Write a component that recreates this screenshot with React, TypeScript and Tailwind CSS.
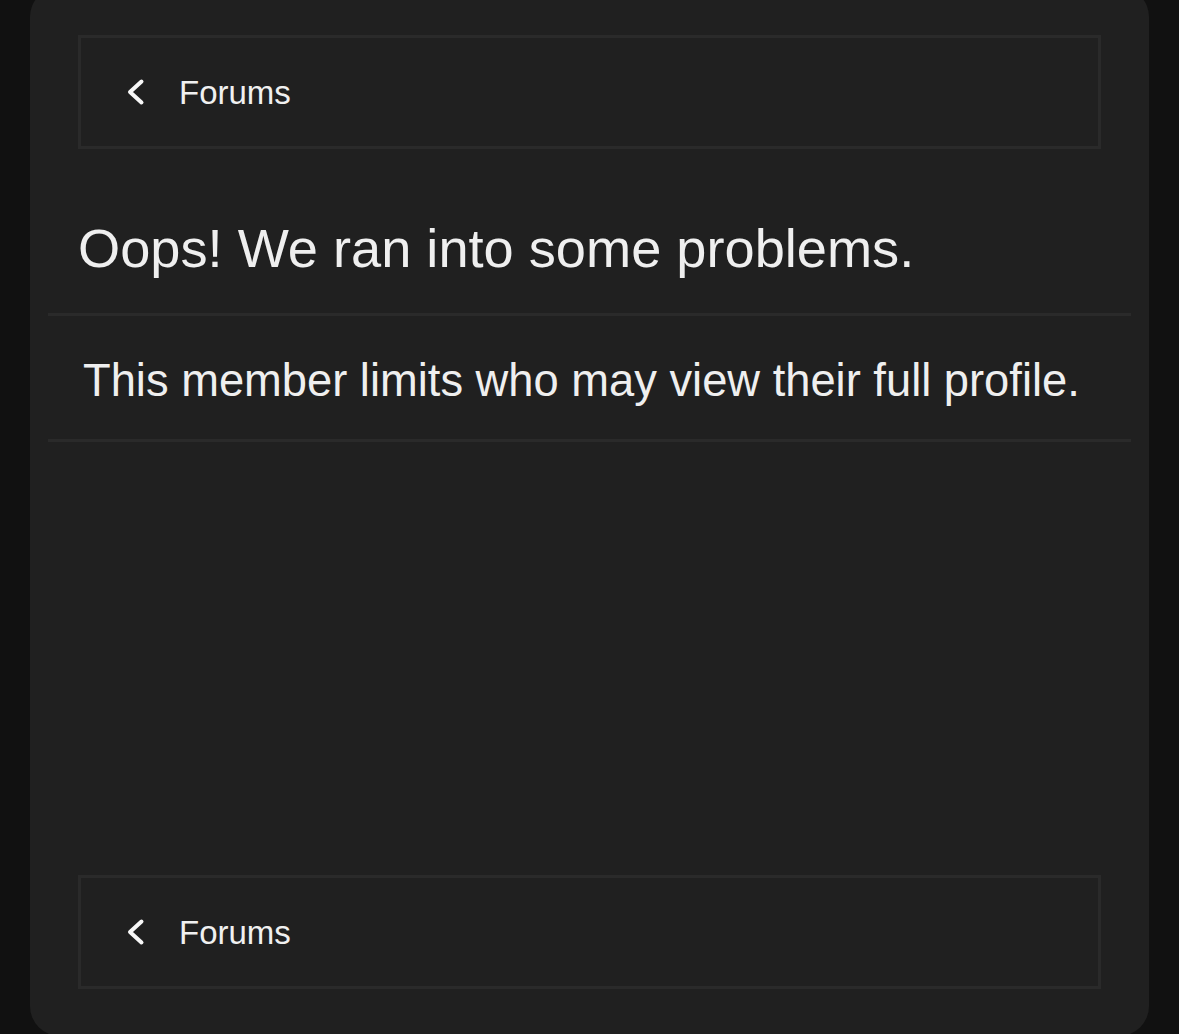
import React from 'react';

// Small back link box used above and below the error message
const BackBox: React.FC<{ className?: string }> = ({ className = '' }) => (
  <div
    className={`mx-[30px] h-[114px] border-[3px] border-[#2a2a2a] flex items-center pl-[46px] ${className}`}
  >
    <svg width="18" height="28" viewBox="0 0 18 28" fill="none" className="shrink-0">
      <polyline
        points="14.5,3.5 3,14 14.5,24.5"
        stroke="#f7f7f7"
        strokeWidth="4"
        strokeLinecap="round"
        strokeLinejoin="round"
      />
    </svg>
    <span className="ml-[34px] text-[33px] leading-none text-[#f0f0f0]">Forums</span>
  </div>
);

const App: React.FC = () => {
  return (
    <div
      className="h-[1034px] overflow-hidden bg-[#111111] px-[30px]"
      style={{ fontFamily: '"Liberation Sans", Arial, sans-serif' }}
    >
      <div className="-mt-[13px] h-[1049px] rounded-[30px] bg-[#202020] px-[18px] flex flex-col">
        <BackBox className="mt-[48px]" />

        {/* Error title */}
        <h1 className="mt-[67px] px-[30px] text-[54.2px] leading-[64px] font-normal text-[#efefef]">
          Oops! We ran into some problems.
        </h1>

        <div className="mt-[33px] h-[3px] bg-[#2a2a2a]" />

        {/* Error message */}
        <p className="mt-[38px] px-[35px] text-[45.3px] leading-[53px] text-[#efefef]">
          This member limits who may view their full profile.
        </p>

        <div className="mt-[32px] h-[3px] bg-[#2a2a2a]" />

        <BackBox className="mt-auto mb-[47px]" />
      </div>
    </div>
  );
};

export default App;
